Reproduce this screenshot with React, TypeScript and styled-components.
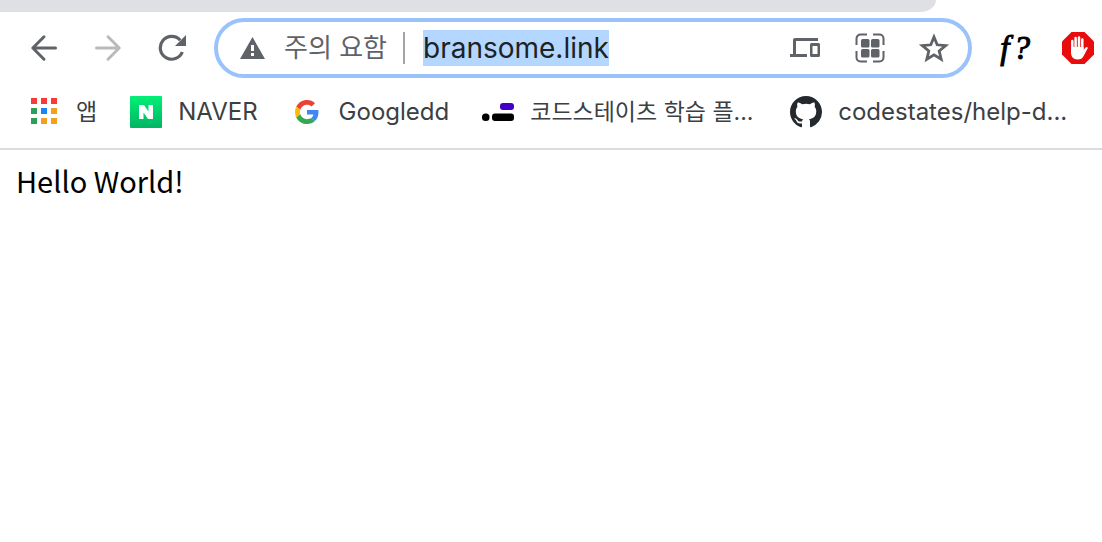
import React from "react";
import styled, { createGlobalStyle } from "styled-components";

const Global = createGlobalStyle`
  * { box-sizing: border-box; }
  body { margin: 0; background: #fff; font-family: Inter, "Noto Sans CJK KR", sans-serif; color: #3c4043; overflow-x: hidden; }
`;

const TabStrip = styled.div`
  height: 12px;
  margin-right: 166px;
  background: #dee0e4;
  border-bottom-right-radius: 16px 12px;
`;

const Toolbar = styled.header`
  display: flex;
  align-items: center;
  padding: 6px 8px 6px 30px;
`;

const NavGroup = styled.nav`
  display: flex;
  gap: 36px;
  margin-right: 28px;
`;

const IconButton = styled.button<{ $faded?: boolean }>`
  display: flex;
  flex: none;
  padding: 0;
  border: 0;
  background: none;
  color: ${(p) => (p.$faded ? "#bababc" : "#5f6368")};
`;

const Omnibox = styled.form`
  display: flex;
  align-items: center;
  flex: 1;
  min-width: 0;
  height: 60px;
  padding: 0 18px 0 22px;
  border: 4px solid #9ac3fb;
  border-radius: 30px;
  color: #5f6368;
`;

const SiteStatus = styled.label`
  display: flex;
  align-items: center;
  gap: 18px;
  padding-right: 16px;
  font-size: 26px;
  line-height: 32px;
  white-space: nowrap;
  border-right: 2px solid #a3a5a8;
`;

const UrlInput = styled.input`
  width: 186px;
  height: 36px;
  margin-left: 18px;
  padding: 0;
  border: 0;
  outline: 0;
  background: #b3d7ff;
  color: #202124;
  font: 28px Inter, sans-serif;
`;

const OmniActions = styled.div`
  display: flex;
  gap: 32px;
  margin-left: auto;
`;

const Extensions = styled.div`
  display: flex;
  align-items: center;
  gap: 32px;
  margin-left: 26px;
`;

const Bookmarks = styled.nav`
  display: flex;
  align-items: center;
  gap: 33px;
  height: 66px;
  padding: 0 30px 8px;
  border-bottom: 2px solid #dadce0;
  white-space: nowrap;
  overflow: hidden;
`;

const Bookmark = styled.a`
  display: flex;
  align-items: center;
  flex: none;
  gap: 16px;
  color: #3c4043;
  text-decoration: none;
`;

const BookmarkLabel = styled.span<{ $korean?: boolean; $long?: boolean }>`
  width: ${(p) => (p.$long ? "227px" : "auto")};
  font-size: ${(p) => (p.$korean ? "23px" : "24px")};
  line-height: 32px;
`;

const Page = styled.main`
  padding: 8px 16px;
  color: #000;
  font: 29px/44px "Noto Sans CJK KR", sans-serif;
`;

const Arrow = ({ flip }: { flip?: boolean }) => (
  <svg width="28" height="28" viewBox="0 0 28 28" fill="none" stroke="currentColor" strokeWidth="3" strokeLinecap="round" strokeLinejoin="round">
    <path d={flip ? "M2.5 14H25M14 2.8 25.2 14 14 25.2" : "M25.5 14H3M14 2.8 2.8 14 14 25.2"} />
  </svg>
);

const Reload = () => (
  <svg width="28" height="28" viewBox="0 0 28 28">
    <path d="M24.300 18A11.400 11.400 0 1 1 22.200 6.200" fill="none" stroke="currentColor" strokeWidth="3.200" />
    <path d="M28 1v11H17z" fill="currentColor" />
  </svg>
);

const Warning = () => (
  <svg width="26" height="24" viewBox="0 0 26 24">
    <path d="M12.500 1 25 23H0z" fill="currentColor" />
    <path d="M11 9h3v6h-3zM11 17h3v3h-3z" fill="#fff" />
  </svg>
);

const Devices = () => (
  <svg width="32" height="32" viewBox="0 0 32 32" fill="currentColor">
    <path d="M5 6h23v3H6v13h11v3H0v-3h3V8a2 2 0 0 1 2-2z" />
    <path fillRule="evenodd" d="M21.500 11h7a1.500 1.500 0 0 1 1.500 1.500v11a1.500 1.500 0 0 1-1.500 1.500h-7a1.500 1.500 0 0 1-1.500-1.500v-11a1.500 1.500 0 0 1 1.500-1.500zm1 3v8h5v-8z" />
  </svg>
);

const QrCode = () => (
  <svg width="32" height="32" viewBox="0 0 32 32">
    <g fill="currentColor">
      <rect x="7" y="7" width="8.500" height="8.500" rx="1.500" />
      <rect x="17" y="7" width="8.500" height="8.500" rx="1.500" />
      <rect x="7" y="17" width="8.500" height="8.500" rx="1.500" />
      <rect x="17" y="17" width="8.500" height="8.500" rx="1.500" />
    </g>
    <path d="M2.500 13V6.500a4 4 0 0 1 4-4H13M19 2.500h6.500a4 4 0 0 1 4 4V13M29.500 19v6.500a4 4 0 0 1-4 4H19M13 29.500H6.500a4 4 0 0 1-4-4V19" fill="none" stroke="currentColor" strokeWidth="2" />
  </svg>
);

const Star = () => (
  <svg width="32" height="32" viewBox="0 0 32 32">
    <path d="m16 5 3.200 7.800 8.500.7-6.500 5.500 2 8.200L16 22.800l-7.200 4.400 2-8.200-6.500-5.500 8.500-.7z" fill="none" stroke="currentColor" strokeWidth="2.800" />
  </svg>
);

const FontExtension = styled.span`
  width: 32px;
  color: #000;
  font: italic 33px/32px "Liberation Serif", serif;
  -webkit-text-stroke: 1px #000;
  display: flex;
  justify-content: flex-end;
  gap: 4px;
`;

const StopHand = () => (
  <svg width="32" height="32" viewBox="0 0 32 32">
    <path d="M9.500 0h13L32 9.500v13L22.500 32h-13L0 22.500v-13z" fill="#e90c0c" />
    <path d="M10.300 18V9M13.600 16V6M17 16V5.500M20.300 17V7.500" stroke="#fff" strokeWidth="2.500" strokeLinecap="round" />
    <path d="M9 15h12.600v3l2-2.500c1-1.200 2.700-.4 2 1l-3.700 7c-1.500 3-3.300 4-6.300 4-4.400 0-6.600-3-6.600-7z" fill="#fff" />
  </svg>
);

const AppsGrid = () => {
  const colors = ["#f93a37", "#f93a37", "#f93a37", "#2e9e5b", "#1a86f5", "#f3a01c", "#2e9e5b", "#f3a01c", "#f3a01c"];
  return (
    <svg width="30" height="28" viewBox="0 0 30 28">
      {colors.map((c, i) => (
        <rect key={i} x={1 + (i % 3) * 10} y={Math.floor(i / 3) * 10} width="6" height="6" fill={c} />
      ))}
    </svg>
  );
};

const NaverLogo = () => (
  <svg width="32" height="32" viewBox="0 0 32 32">
    <defs>
      <linearGradient id="naver" x1="0" y1="0" x2="0" y2="1">
        <stop offset="0" stopColor="#00f076" />
        <stop offset="1" stopColor="#00b464" />
      </linearGradient>
    </defs>
    <rect width="32" height="32" rx="1" fill="url(#naver)" />
    <path d="M9 9h5l4.500 6.500V9H23v14h-5l-4.500-6.500V23H9z" fill="#fff" />
  </svg>
);

const GoogleLogo = () => (
  <svg width="32" height="32" viewBox="-8 -8 64 64">
    <path fill="#ea4335" d="M24 9.500c3.540 0 6.710 1.220 9.210 3.600l6.850-6.850C35.900 2.380 30.470 0 24 0 14.620 0 6.510 5.380 2.560 13.220l7.980 6.190C12.430 13.720 17.740 9.500 24 9.500z" />
    <path fill="#4285f4" d="M46.980 24.550c0-1.570-.15-3.090-.38-4.550H24v9.020h12.940c-.58 2.960-2.260 5.480-4.780 7.180l7.730 6c4.510-4.180 7.090-10.360 7.090-17.650z" />
    <path fill="#fbbc05" d="M10.530 28.590c-.48-1.450-.76-2.990-.76-4.590s.27-3.140.76-4.590l-7.980-6.190C.92 16.460 0 20.120 0 24c0 3.880.92 7.540 2.560 10.780l7.970-6.190z" />
    <path fill="#34a853" d="M24 48c6.480 0 11.930-2.130 15.890-5.810l-7.730-6c-2.150 1.450-4.920 2.300-8.160 2.300-6.260 0-11.570-4.220-13.470-9.910l-7.980 6.190C6.510 42.620 14.620 48 24 48z" />
  </svg>
);

const CodeStatesLogo = () => (
  <svg width="32" height="32" viewBox="0 0 32 32">
    <rect x="18" y="7" width="14" height="7" rx="3" fill="#4000c8" />
    <rect x="0" y="17.500" width="7.500" height="7.500" rx="3.500" />
    <rect x="10" y="17.500" width="22" height="7.500" rx="3" />
  </svg>
);

const GithubLogo = () => (
  <svg width="32" height="32" viewBox="0 0 16 16" fill="#24292e">
    <path fillRule="evenodd" d="M8 0C3.580 0 0 3.580 0 8c0 3.540 2.290 6.530 5.470 7.590.4.070.55-.17.55-.38 0-.19-.01-.82-.01-1.490-2.010.37-2.530-.49-2.690-.94-.09-.23-.48-.94-.82-1.130-.28-.15-.68-.52-.01-.53.63-.01 1.080.58 1.230.82.72 1.210 1.870.87 2.330.66.07-.52.28-.87.51-1.070-1.780-.2-3.640-.89-3.640-3.950 0-.87.31-1.590.82-2.150-.08-.2-.36-1.020.08-2.120 0 0 .67-.21 2.200.82.64-.18 1.320-.27 2-.27s1.360.09 2 .27c1.530-1.040 2.200-.82 2.200-.82.44 1.100.16 1.920.08 2.120.51.56.82 1.270.82 2.150 0 3.070-1.870 3.750-3.650 3.950.29.25.54.73.54 1.480 0 1.070-.01 1.930-.01 2.200 0 .21.15.46.55.38A8.010 8.010 0 0 0 16 8c0-4.420-3.580-8-8-8z" />
  </svg>
);

export default function App() {
  return (
    <>
      <Global />
      <TabStrip />
      <Toolbar>
        <NavGroup>
          <IconButton aria-label="뒤로"><Arrow /></IconButton>
          <IconButton aria-label="앞으로" $faded><Arrow flip /></IconButton>
          <IconButton aria-label="새로고침"><Reload /></IconButton>
        </NavGroup>
        <Omnibox onSubmit={(e) => e.preventDefault()}>
          <SiteStatus htmlFor="url"><Warning />주의 요함</SiteStatus>
          <UrlInput id="url" defaultValue="bransome.link" />
          <OmniActions>
            <IconButton type="button" aria-label="기기로 보내기"><Devices /></IconButton>
            <IconButton type="button" aria-label="QR 코드"><QrCode /></IconButton>
            <IconButton type="button" aria-label="북마크"><Star /></IconButton>
          </OmniActions>
        </Omnibox>
        <Extensions>
          <IconButton aria-label="글꼴"><FontExtension><span>f</span><span>?</span></FontExtension></IconButton>
          <IconButton aria-label="광고 차단"><StopHand /></IconButton>
        </Extensions>
      </Toolbar>
      <Bookmarks>
        <Bookmark href="#"><AppsGrid /><BookmarkLabel $korean>앱</BookmarkLabel></Bookmark>
        <Bookmark href="#"><NaverLogo /><BookmarkLabel>NAVER</BookmarkLabel></Bookmark>
        <Bookmark href="#"><GoogleLogo /><BookmarkLabel>Googledd</BookmarkLabel></Bookmark>
        <Bookmark href="#"><CodeStatesLogo /><BookmarkLabel $korean $long>코드스테이츠 학습 플...</BookmarkLabel></Bookmark>
        <Bookmark href="#"><GithubLogo /><BookmarkLabel $long>codestates/help-d...</BookmarkLabel></Bookmark>
      </Bookmarks>
      <Page>Hello World!</Page>
    </>
  );
}
